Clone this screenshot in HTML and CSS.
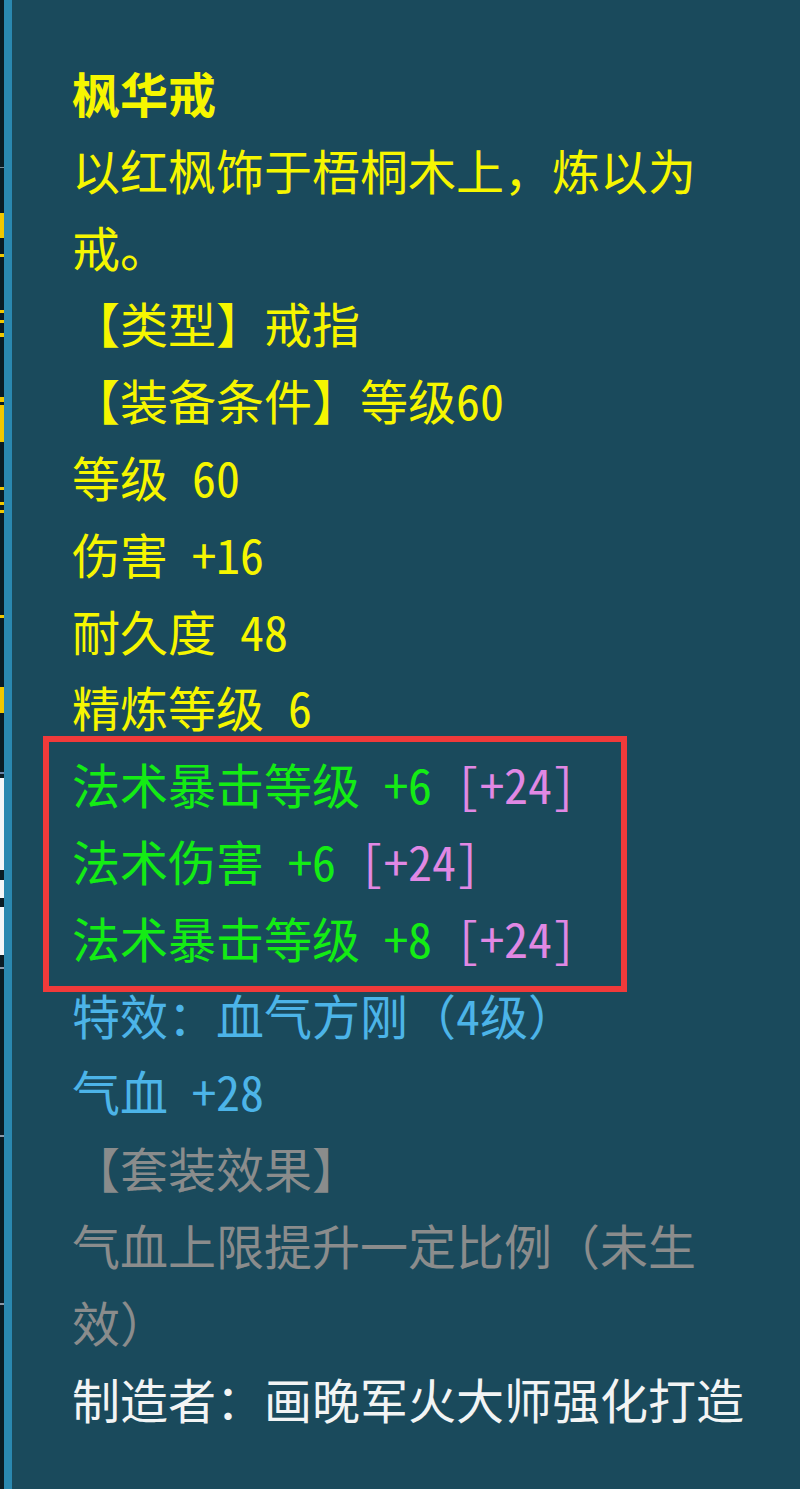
FILE: index.html
```html
<!DOCTYPE html>
<html lang="zh-CN">
  <head>
    <meta charset="UTF-8" />
    <meta name="viewport" content="width=device-width, initial-scale=1.0" />
    <title>枫华戒</title>
    <link rel="stylesheet" href="styles.css">
  </head>
  <body>
    <div class="edge"></div>
    <div class="rail"></div>
    <div class="tip">
      <div class="line name">枫华戒</div>
      <div class="line">以红枫饰于梧桐木上，炼以为</div>
      <div class="line">戒。</div>
      <div class="line">【类型】戒指</div>
      <div class="line">【装备条件】等级60</div>
      <div class="line">等级 60</div>
      <div class="line">伤害 +16</div>
      <div class="line">耐久度 48</div>
      <div class="line">精炼等级 6</div>
      <div class="mark">
        <div class="line green">法术暴击等级 +6 <span class="gem">[+24]</span></div>
        <div class="line green">法术伤害 +6 <span class="gem">[+24]</span></div>
        <div class="line green">法术暴击等级 +8 <span class="gem">[+24]</span></div>
      </div>
      <div class="line blue">特效：血气方刚（4级）</div>
      <div class="line blue">气血 +28</div>
      <div class="line grey">【套装效果】</div>
      <div class="line grey">气血上限提升一定比例（未生</div>
      <div class="line grey">效）</div>
      <div class="line white">制造者：画晚军火大师强化打造</div>
    </div>
  </body>
</html>
```

FILE: styles.css
```css
* {
  padding: 0;
  margin: 0;
  box-sizing: border-box;
}
body {
  display: flex;
  min-height: 100vh;
  background: #1a4a5c;
  font-family: "Noto Sans Mono CJK SC", "Noto Sans CJK SC", "Liberation Mono", monospace;
}

/* neighbouring window peeking in on the left */
.edge {
  width: 4px;
  background:
    linear-gradient(to bottom,
      transparent 167px, #7a8c98 167px, #7a8c98 168px, transparent 168px,
      transparent 213px, #f0c800 213px, #f0c800 238px, transparent 238px,
      transparent 254px, #f0c800 254px, #f0c800 257px, transparent 257px,
      transparent 310px, #f0c800 310px, #f0c800 313px, transparent 313px,
      transparent 320px, #f0c800 320px, #f0c800 323px, transparent 323px,
      transparent 333px, #f0c800 333px, #f0c800 337px, transparent 337px,
      transparent 397px, #f0c800 397px, #f0c800 402px, transparent 402px,
      transparent 405px, #f0c800 405px, #f0c800 442px, transparent 442px,
      transparent 487px, #f0c800 487px, #f0c800 490px, transparent 490px,
      transparent 502px, #f0c800 502px, #f0c800 505px, transparent 505px,
      transparent 510px, #f0c800 510px, #f0c800 513px, transparent 513px,
      transparent 615px, #f0c800 615px, #f0c800 618px, transparent 618px,
      transparent 687px, #f0c800 687px, #f0c800 713px, transparent 713px,
      transparent 772px, #6a84a8 772px, #6a84a8 774px, transparent 774px,
      transparent 778px, #f4f6f8 778px, #f4f6f8 870px, transparent 870px,
      transparent 880px, #f4f6f8 880px, #f4f6f8 898px, transparent 898px,
      transparent 907px, #f4f6f8 907px, #f4f6f8 955px, transparent 955px,
      transparent 967px, #8a98a8 967px, #8a98a8 969px, transparent 969px,
      transparent 1135px, #8a98a8 1135px, #8a98a8 1137px, transparent 1137px,
      transparent 1303px, #8a98a8 1303px, #8a98a8 1305px, transparent 1305px),
    #0a1c24;
}
.rail {
  width: 8px;
  background: #2a88b0;
}

.tip {
  flex: 1;
  padding: 54px 0 0 60px;
  color: #f6f600;
  font-size: 48px;
  line-height: 76.8px;
  white-space: nowrap;
}
.name {
  font-weight: bold;
}
.green {
  color: #14ec14;
}
.gem {
  color: #e088e4;
}
.blue {
  color: #4cb4e8;
}
.grey {
  color: #8a8c8c;
}
.white {
  color: #f2f4f4;
}

/* red frame drawn round the magic stats, kept out of the flow */
.mark {
  width: 584px;
  margin: -9px 0 -16px -29px;
  padding: 3px 0 10px 23px;
  border: 6px solid #f03a3a;
}
```
